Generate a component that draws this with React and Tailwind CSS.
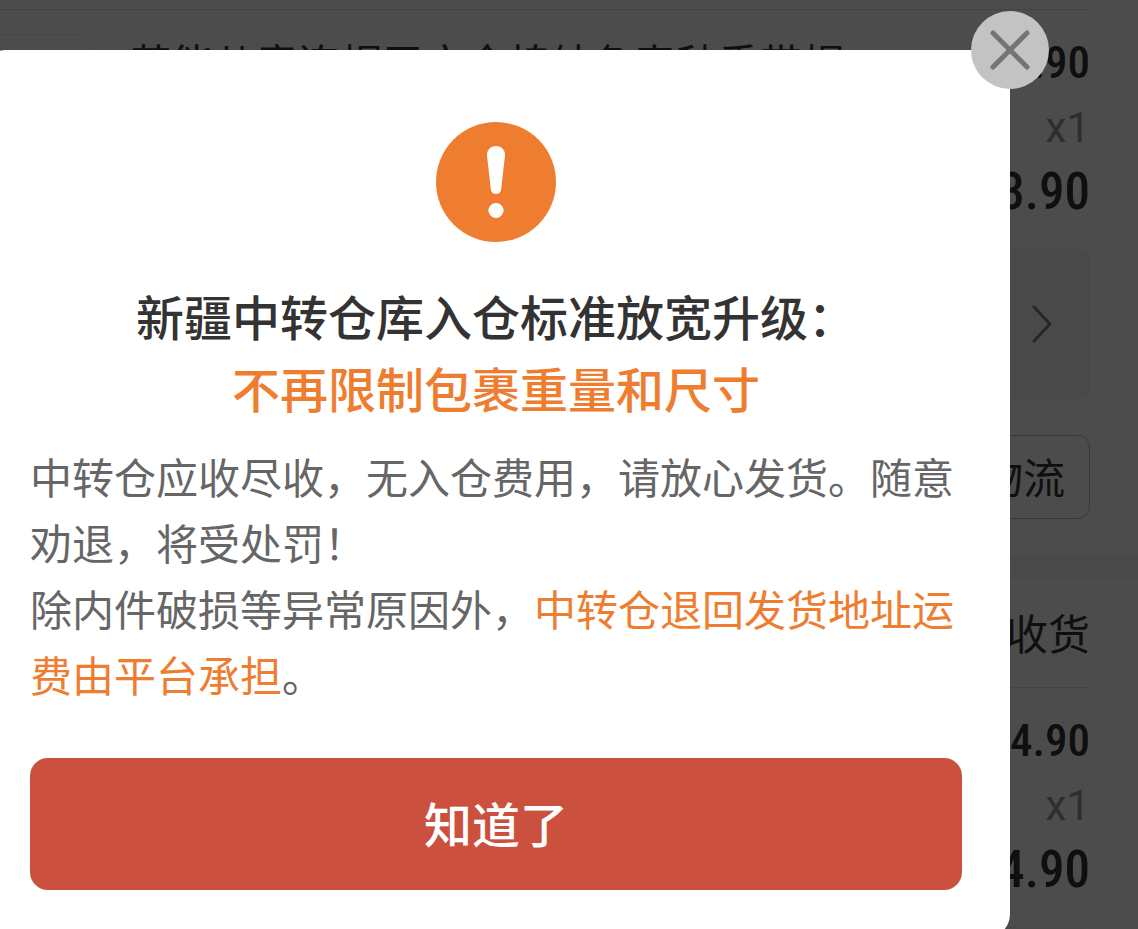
import React from "react";

function Price({ children, large = false }) {
  return (
    <span
      className={
        large
          ? "font-['Roboto_Condensed','Roboto','Noto_Sans_CJK_SC',sans-serif] text-[51px] leading-[56px] font-medium text-[#333]"
          : "font-['Roboto_Condensed','Roboto','Noto_Sans_CJK_SC',sans-serif] text-[45px] leading-[58px] font-medium text-[#333]"
      }
    >
      {children}
    </span>
  );
}

function OrderItem({ title, price }) {
  return (
    <div className="pt-6">
      <div className="flex items-start">
        <div className="h-[186px] w-[94px] shrink-0 rounded-r-xl border border-l-0 border-[#eee]" />
        <p className="ml-9 min-w-0 flex-1 text-[42px] leading-[56px] text-[#333]">{title}</p>
        <div className="flex shrink-0 flex-col items-end">
          <Price>{price}</Price>
          <span className="font-['Roboto',sans-serif] text-[42px] leading-[72px] text-[#999]">
            x1
          </span>
          <Price large>{price}</Price>
        </div>
      </div>
      <button
        type="button"
        aria-label="查看详情"
        className="mt-[29px] ml-12 flex h-[150px] w-[calc(100%-48px)] items-center justify-end rounded-xl bg-[#f5f5f5] pr-9"
      >
        <svg width="24" height="40" viewBox="0 0 24 40" fill="none" aria-hidden="true">
          <path
            d="M4 3L20 20L4 37"
            stroke="#808080"
            strokeWidth="3"
            strokeLinecap="round"
            strokeLinejoin="round"
          />
        </svg>
      </button>
    </div>
  );
}

function OrderPage() {
  return (
    <main className="bg-white pt-[9px]">
      <section className="pr-12">
        <div className="border-t border-[#e0e0e0]">
          <OrderItem title="英能儿童连帽卫衣全棉纯色春秋季带帽" price="¥3.90" />
        </div>
        <div className="flex justify-end py-9">
          <button
            type="button"
            className="h-[84px] rounded-xl border border-[#bbb] px-6 pb-1 text-[42px] text-[#333]"
          >
            查看物流
          </button>
        </div>
      </section>
      <div className="h-6 bg-[#f5f5f5]" />
      <section className="pr-12">
        <header className="flex h-[108px] items-center justify-end pb-1 text-[42px] text-[#333]">
          待收货
        </header>
        <div className="border-t border-[#e0e0e0]">
          <OrderItem title="" price="¥4.90" />
        </div>
      </section>
    </main>
  );
}

function NoticeDialog() {
  return (
    <div
      role="dialog"
      aria-modal="true"
      aria-labelledby="notice-title"
      className="relative mt-[50px] mr-32 -ml-[18px] rounded-3xl bg-white px-12 pt-[72px] pb-12"
    >
      <button
        type="button"
        aria-label="关闭"
        className="absolute -top-[39px] -right-[39px] flex size-[78px] items-center justify-center rounded-full bg-[#c3c3c3]"
      >
        <svg width="42" height="42" viewBox="0 0 42 42" fill="none" aria-hidden="true">
          <path d="M4 4L38 38M38 4L4 38" stroke="#757575" strokeWidth="5" strokeLinecap="round" />
        </svg>
      </button>

      <svg className="mx-auto block" width="120" height="120" viewBox="0 0 120 120" aria-hidden="true">
        <circle cx="60" cy="60" r="60" fill="#ee7d30" />
        <path
          d="M60 24C65.4 24 69.4 28.2 69 33.6L65.2 67.2C64.8 70.2 62.8 72 60 72C57.2 72 55.2 70.2 54.8 67.2L51 33.6C50.6 28.2 54.6 24 60 24Z"
          fill="#fff"
        />
        <circle cx="60" cy="88.5" r="7.6" fill="#fff" />
      </svg>

      <h1
        id="notice-title"
        className="mt-[37px] text-center text-[48px] leading-[72px] font-medium text-[#333]"
      >
        新疆中转仓库入仓标准放宽升级：
        <br />
        <span className="text-[#ee7d30]">不再限制包裹重量和尺寸</span>
      </h1>

      <div className="mt-5 text-[42px] leading-[66px] text-[#666]">
        <p>中转仓应收尽收，无入仓费用，请放心发货。随意劝退，将受处罚！</p>
        <p>
          除内件破损等异常原因外，
          <span className="text-[#ee7d30]">中转仓退回发货地址运费由平台承担</span>。
        </p>
      </div>

      <button
        type="button"
        className="mt-[51px] h-[132px] w-full rounded-[18px] bg-[#cb503e] pb-1 text-[48px] font-medium text-white"
      >
        知道了
      </button>
    </div>
  );
}

export default function App() {
  return (
    <div
      lang="zh-CN"
      className="relative h-screen overflow-hidden bg-white font-['Noto_Sans_CJK_SC',sans-serif]"
    >
      <OrderPage />
      <div className="absolute inset-0 flow-root bg-black/70">
        <NoticeDialog />
      </div>
    </div>
  );
}
